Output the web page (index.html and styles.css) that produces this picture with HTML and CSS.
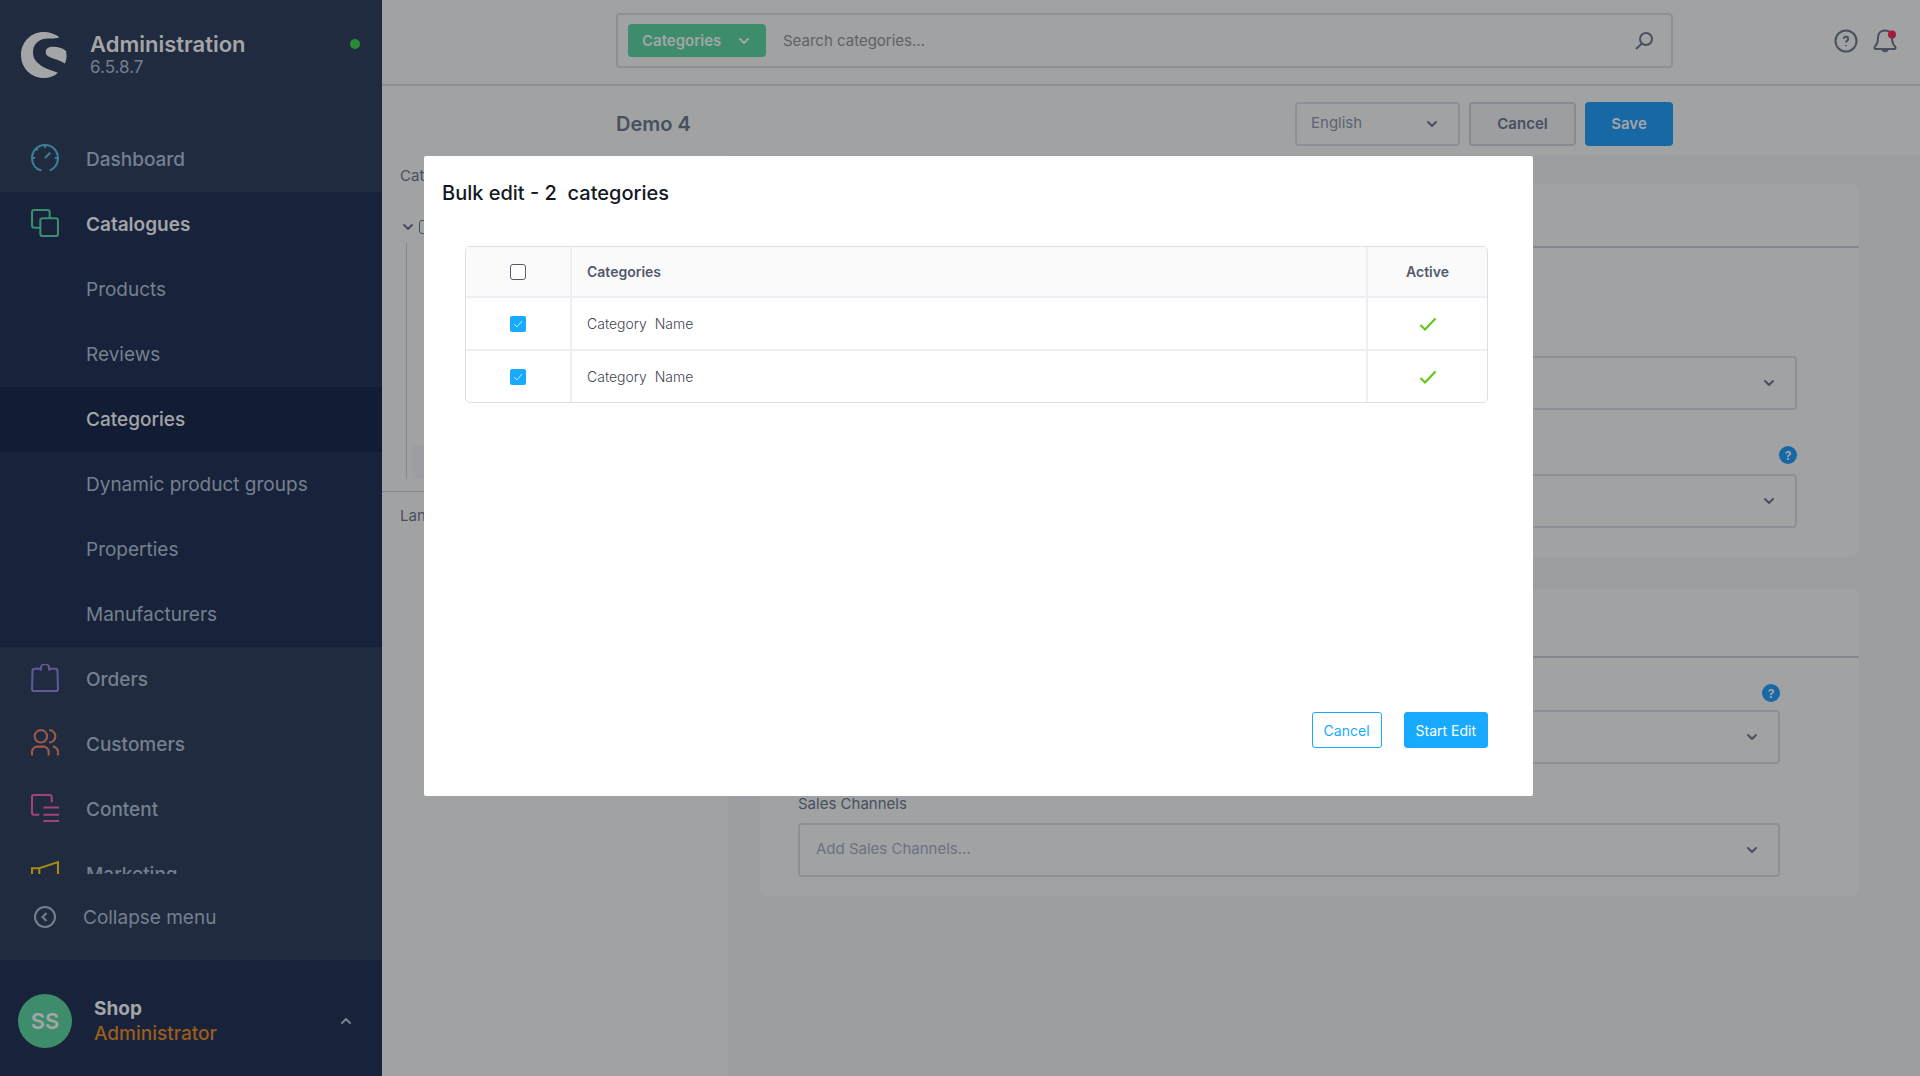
FILE: index.html
```html
<!DOCTYPE html>
<html lang="en">
<head>
<meta charset="utf-8">
<title>Administration</title>
<link rel="stylesheet" href="styles.css">
</head>
<body>
<svg class="sprite" aria-hidden="true">
  <symbol id="chevron" viewBox="0 0 12 8"><path d="M2 2l4 4 4-4" fill="none" stroke="currentColor" stroke-width="2" stroke-linecap="round" stroke-linejoin="round"/></symbol>
  <symbol id="tick" viewBox="0 0 18 14"><path d="M1.500 8l4.500 4.500L16.500 1.500" fill="none" stroke="currentColor" stroke-width="2"/></symbol>
</svg>
<div class="app">
  <aside class="sidebar">
    <header class="brand">
      <svg class="logo" viewBox="0 0 46 46"><path d="M38.300 5.300C34 2 29 0 22.500 0 10 0 0 10 0 23s10 23 23 23c5 0 10-1.500 14-5.300C30 38 12 34 12 20.500 12 11 19 6.500 27 6.500c4 0 8 .200 11.300-1.200z"/><path d="M45 19C42 16 36 14.700 32 14.700c-4.500 0-7.300 2-7.300 5 0 3 1.500 4.300 4.300 5.500 5 2 11 3.500 15 6.300 1.600-4 2-8 1-12.500z"/></svg>
      <div class="brand-text"><strong>Administration</strong><span>6.5.8.7</span></div>
      <i class="status"></i>
    </header>
    <nav class="menu">
      <a class="item" href="#"><svg class="dash" viewBox="0 0 27 27"><path d="M10 25.500C4.500 24 1 19.500 1 13.700 1 6.500 6.500 1 13.500 1S26 6.500 26 13.700c0 5.800-3.500 10.300-8 11.800M13.500 1v2.500M1 13.500h3M23 13.500h3M5.500 5l1 1M13.500 13.500l5-5"/></svg>Dashboard</a>
      <div class="group">
        <a class="item open" href="#"><svg class="cat" viewBox="0 0 27 27"><rect x="9" y="9" width="17" height="17" rx="2"/><path d="M9 18H3a2 2 0 0 1-2-2V3a2 2 0 0 1 2-2h13a2 2 0 0 1 2 2v6"/></svg>Catalogues</a>
        <a class="item sub" href="#">Products</a>
        <a class="item sub" href="#">Reviews</a>
        <a class="item sub active" href="#">Categories</a>
        <a class="item sub" href="#">Dynamic product groups</a>
        <a class="item sub" href="#">Properties</a>
        <a class="item sub" href="#">Manufacturers</a>
      </div>
      <a class="item" href="#"><svg class="ord" viewBox="0 0 27 27"><path d="M7 4.500H3.500a2 2 0 0 0-2 2L1 24a2 2 0 0 0 2 2h21a2 2 0 0 0 2-2L25.500 6.500a2 2 0 0 0-2-2H20M7 4.500h2.500V4a4 4 0 0 1 8 0v.500H20M9.500 4.500v2M17.500 4.500v2"/></svg>Orders</a>
      <a class="item" href="#"><svg class="cus" viewBox="0 0 27 27"><circle cx="9.500" cy="7" r="6"/><path d="M1 25.500V22a5 5 0 0 1 5-5h6a5 5 0 0 1 5 5v3.500M17.500 1a6 6 0 0 1 0 12M21 17a5 5 0 0 1 5 5v3.500"/></svg>Customers</a>
      <a class="item" href="#"><svg class="con" viewBox="0 0 27 27"><path d="M8 20H3a2 2 0 0 1-2-2V3a2 2 0 0 1 2-2h15a2 2 0 0 1 2 2v5M12 13h15M12 20h15M12 26h15"/></svg>Content</a>
      <a class="item" href="#"><svg class="mar" viewBox="0 0 27 27"><path d="M1 9h7l18-6v20l-18-5H1zM8 9v9M5 18v7h7v-6"/></svg>Marketing</a>
    </nav>
    <button class="collapse" type="button"><svg viewBox="0 0 22 22"><circle cx="11" cy="11" r="10"/><path d="M12.500 7L8.500 11l4 4"/></svg>Collapse menu</button>
    <button class="user" type="button">
      <span class="avatar">SS</span>
      <span class="user-text"><b>Shop</b><span>Administrator</span></span>
      <svg class="chev up"><use href="#chevron"/></svg>
    </button>
  </aside>

  <main class="main">
    <header class="topbar">
      <div class="search">
        <button class="tag" type="button">Categories<svg class="chev"><use href="#chevron"/></svg></button>
        <input type="text" placeholder="Search categories..." aria-label="Search categories">
        <svg class="lens" viewBox="0 0 18 18"><circle cx="11" cy="7" r="6"/><path d="M7 11.500L1 17"/></svg>
      </div>
      <div class="tools">
        <svg viewBox="0 0 24 24"><circle cx="12" cy="12" r="10.500"/><path d="M9.800 9.800a2.200 2.200 0 1 1 3.400 1.900c-.800.500-1.200.800-1.200 1.800M12 16v1"/></svg>
        <svg viewBox="0 0 24 24"><path d="M12 1.500c-4.500 0-7 3-7 7 0 6-1.500 7.500-3 9-1 1-.700 2.500.500 2.500h19c1.200 0 1.500-1.500.500-2.500-1.500-1.500-3-3-3-9 0-4-2.500-7-7-7zM9.500 20c0 3 5 3 5 0"/><circle class="alert" cx="19" cy="5.500" r="4"/></svg>
      </div>
    </header>
    <div class="titlebar">
      <div class="titlebar-in">
        <h1>Demo 4</h1>
        <label class="select lang"><select aria-label="Language"><option>English</option></select><svg class="chev"><use href="#chevron"/></svg></label>
        <button class="btn" type="button">Cancel</button>
        <button class="btn save" type="button">Save</button>
      </div>
    </div>
    <div class="body">
      <section class="tree">
        <div class="tree-top">
          <h2>Categories</h2>
          <label class="root"><svg class="chev"><use href="#chevron"/></svg><input type="checkbox" aria-label="Root category"></label>
          <div class="branch"><div class="picked"></div></div>
        </div>
        <h2 class="landing">Landing pages</h2>
      </section>
      <section class="cards">
        <div class="card">
          <div class="card-head"></div>
          <div class="card-body general">
            <label class="select"><select aria-label="Type"><option></option></select><svg class="chev"><use href="#chevron"/></svg></label>
            <span class="help">?</span>
            <label class="select"><select aria-label="Entry point"><option></option></select><svg class="chev"><use href="#chevron"/></svg></label>
          </div>
        </div>
        <div class="card">
          <div class="card-head second"></div>
          <div class="card-body entry">
            <span class="help">?</span>
            <label class="select"><select aria-label="Navigation"><option></option></select><svg class="chev"><use href="#chevron"/></svg></label>
            <label class="label" for="channels">Sales Channels</label>
            <div class="select"><select id="channels"><option>Add Sales Channels...</option></select><svg class="chev"><use href="#chevron"/></svg></div>
          </div>
        </div>
      </section>
    </div>
  </main>
</div>

<div class="backdrop">
  <section class="modal" role="dialog" aria-labelledby="modal-title">
    <h2 id="modal-title">Bulk edit - 2&nbsp; categories</h2>
    <div class="frame">
      <table>
        <colgroup><col class="c-check"><col><col class="c-active"></colgroup>
        <thead><tr><th><input type="checkbox" aria-label="Select all"></th><th class="name">Categories</th><th>Active</th></tr></thead>
        <tbody>
          <tr><td><input type="checkbox" checked aria-label="Select row 1"></td><td class="name">Category&nbsp; Name</td><td><svg class="tick"><use href="#tick"/></svg></td></tr>
          <tr><td><input type="checkbox" checked aria-label="Select row 2"></td><td class="name">Category&nbsp; Name</td><td><svg class="tick"><use href="#tick"/></svg></td></tr>
        </tbody>
      </table>
    </div>
    <footer><button class="outline" type="button">Cancel</button><button class="primary" type="button">Start Edit</button></footer>
  </section>
</div>
</body>
</html>
```
FILE: styles.css
```css
* { box-sizing: border-box; }
body { margin: 0; font-family: Inter, "Liberation Sans", sans-serif; font-size: 15px; color: #47515e; background: #9d9ea2; }
h1, h2 { margin: 0; }
button, input, select { font: inherit; color: inherit; }
button { cursor: pointer; }
.sprite { position: absolute; width: 0; height: 0; }
.chev { width: 12px; height: 8px; flex: none; color: #47515e; }

.app { display: grid; grid-template-columns: 382px 1fr; height: 100vh; overflow: hidden; }

/* Sidebar */
.sidebar { display: flex; flex-direction: column; height: 100vh; background: #202b40; color: #75808f; }
.brand { display: flex; align-items: flex-start; height: 127px; padding: 32px 22px 0 21px; flex: none; }
.logo { width: 46px; height: 46px; fill: #a4a5a7; }
.brand-text { display: flex; flex-direction: column; flex: 1; margin-left: 23px; font-size: 17px; line-height: 22px; }
.brand-text strong { font-size: 22px; line-height: 24px; font-weight: 600; color: #a4a5a7; }
.status { width: 10px; height: 10px; margin-top: 7px; border-radius: 50%; background: #2a8a35; }
.menu { flex: 1; min-height: 0; overflow: hidden; }
.item { display: flex; align-items: center; height: 65px; padding-left: 31px; color: inherit; text-decoration: none; font-size: 19px; font-weight: 500; }
.item svg { width: 28px; height: 28px; margin: 0 27px 4px 0; fill: none; stroke: currentColor; stroke-width: 2; }
.group { background: #18233b; }
.sub { padding-left: 86px; font-weight: 400; }
.open, .active { color: #a4a5a7; }
.open { font-weight: 600; }
.active { background: #121d35; font-weight: 500; }
.dash { color: #3c8097; }
.cat { color: #3b8e6d; }
.ord { color: #61589a; }
.cus { color: #9c5a49; }
.con { color: #a1437d; }
.mar { color: #a28c13; }
.collapse { display: flex; align-items: center; height: 86px; flex: none; padding: 0 0 0 34px; border: 0; background: none; font-size: 19px; }
.collapse svg { width: 22px; height: 22px; margin-right: 27px; fill: none; stroke: currentColor; stroke-width: 2; }
.user { display: flex; align-items: center; height: 116px; flex: none; padding: 6px 30px 0 18px; border: 0; background: #18233b; text-align: left; }
.avatar { display: grid; place-items: center; width: 54px; height: 54px; border-radius: 50%; background: #3d8d6c; color: #a4a5a7; font-size: 22px; font-weight: 600; }
.user-text { display: flex; flex-direction: column; flex: 1; margin-left: 22px; font-size: 19px; line-height: 25px; color: #9b5d1c; }
.user-text b { color: #a4a5a7; font-weight: 700; }
.user-text span { font-weight: 500; }
.up { transform: rotate(180deg); color: #75808f; }

/* Top area */
.main { display: flex; flex-direction: column; min-width: 0; }
.topbar, .titlebar { display: grid; grid-template-columns: 234px 1fr 247px; background: #a1a2a3; }
.topbar { height: 86px; padding-top: 13px; border-bottom: 2px solid #8d9096; flex: none; }
.search { grid-column: 2; display: flex; align-items: center; height: 55px; padding: 0 18px 0 10px; border: 2px solid #8d9097; border-radius: 4px; }
.tag { display: flex; align-items: center; justify-content: space-between; width: 138px; height: 33px; padding: 0 16px 0 14px; border: 0; border-radius: 4px; background: #3d8d6c; color: #a4a5a7; font-weight: 600; }
.tag .chev { color: #a4a5a7; }
.search input { flex: 1; min-width: 0; margin-left: 17px; padding: 0; border: 0; outline: 0; background: none; }
.search input::placeholder { color: #5d6268; opacity: 1; }
.lens { width: 18px; height: 18px; fill: none; stroke: #47515e; stroke-width: 2; }
.tools { display: flex; justify-content: flex-end; gap: 15px; padding: 16px 23px 0 0; }
.tools svg { width: 24px; height: 24px; fill: none; stroke: #47515e; stroke-width: 2; }
.tools .alert { fill: #a01c3c; stroke: none; }
.titlebar { height: 69px; flex: none; }
.titlebar-in { grid-column: 2; display: flex; align-items: center; padding-top: 6px; }
.titlebar h1 { flex: 1; font-size: 20px; font-weight: 600; line-height: 24px; }
.select { display: grid; align-items: center; height: 54px; }
.select select, .select .chev { grid-area: 1 / 1; }
.select .chev { justify-self: end; margin-right: 22px; }
.select select { appearance: none; width: 100%; height: 100%; padding: 0 16px 4px; border: 2px solid #8d9097; border-radius: 4px; background: none; color: #6a7380; }
.select.lang { width: 165px; height: 44px; margin-right: 9px; }
.select.lang select { padding: 0 14px 2px; color: #5b6470; }
.btn { width: 107px; height: 44px; margin-right: 9px; padding: 0; border: 2px solid #868a92; border-radius: 4px; background: #9c9ea1; font-weight: 600; }
.btn.save { width: 88px; margin-right: 0; border: 0; background: #1868a6; color: #a4a5a7; }

/* Category page */
.body { display: grid; grid-template-columns: 346px 1fr; flex: 1; min-height: 0; }
.tree { background: #a1a2a3; }
.tree h2 { font-size: 15px; line-height: 20px; font-weight: 400; padding-left: 18px; }
.tree-top { padding-top: 11px; height: 337px; border-bottom: 1px solid #85878a; }
.root { display: flex; align-items: center; gap: 5px; height: 12px; margin: 35px 0 10px 20px; }
.root input { appearance: none; width: 14px; height: 14px; margin: 0; border: 1px solid #47515e; border-radius: 3px; }
.branch { display: flex; align-items: flex-end; height: 236px; margin-left: 24px; padding-left: 5px; border-left: 1px solid #85878a; }
.picked { flex: 1; height: 34px; border-radius: 4px; background: #9d9ea2; }
.tree .landing { padding-top: 14px; }
.cards { display: flex; flex-direction: column; gap: 32px; padding: 29px 61px 0 32px; }
.card { border-radius: 8px; background: #a1a2a3; }
.card-head { height: 64px; border-bottom: 2px solid #84868e; }
.card-head.second { height: 69px; }
.card-body { display: flex; flex-direction: column; }
.general { padding: 108px 62px 29px; }
.entry { padding: 26px 79px 19px 38px; }
.help { display: grid; place-items: center; align-self: flex-end; width: 18px; height: 18px; border-radius: 50%; background: #1868a6; color: #a4a5a7; font-size: 12px; font-weight: 700; }
.general .help { margin: 36px 0 10px; }
.entry .help { margin-bottom: 8px; }
.label { margin: 30px 0 9px; line-height: 20px; }

/* Dialog */
.backdrop { position: fixed; inset: 0; padding: 156px 387px 0 424px; }
.modal { display: flex; flex-direction: column; min-height: 640px; padding: 24px 45px 48px 41px; border-radius: 2px; background: #fff; color: #3f4652; }
.modal h2 { margin-left: -23px; font-size: 20px; line-height: 26px; font-weight: 500; color: #14181f; }
.frame { margin-top: 40px; border: 1px solid #dcdfe6; border-radius: 5px; overflow: hidden; }
table { width: 100%; border-collapse: separate; border-spacing: 0; table-layout: fixed; }
.c-check { width: 106px; }
.c-active { width: 119px; }
th, td { height: 53px; padding: 0; text-align: center; vertical-align: middle; font-size: 14px; border-right: 2px solid #edeff4; border-bottom: 2px solid #edeff4; }
th { height: 51px; background: #fafafa; color: #525a6b; font-weight: 600; }
th:last-child, td:last-child { border-right: 0; }
tr:last-child td { height: 51px; border-bottom: 0; }
td { font-weight: 300; }
.modal .name { padding-left: 15px; text-align: left; }
.modal input { appearance: none; display: block; width: 16px; height: 16px; margin: 0 auto; border: 1px solid #525a6b; border-radius: 3px; background: #fff; }
.modal input:checked { border: 0; border-radius: 2px; background: #18aaff url("data:image/svg+xml,%3Csvg xmlns='http://www.w3.org/2000/svg' viewBox='0 0 16 16'%3E%3Cpath d='M4 8l3 3 5-6' fill='none' stroke='%23bfe6ff'/%3E%3C/svg%3E"); }
.tick { display: block; width: 18px; height: 14px; margin: 0 auto; color: #5ac80e; }
.modal footer { display: flex; justify-content: flex-end; gap: 22px; margin-top: auto; }
.modal footer button { height: 36px; padding: 0 11px; border: 1px solid #18aaff; border-radius: 3px; background: #fff; color: #18aaff; font-size: 14px; }
.modal footer .primary { background: #18aaff; color: #fff; }
```
